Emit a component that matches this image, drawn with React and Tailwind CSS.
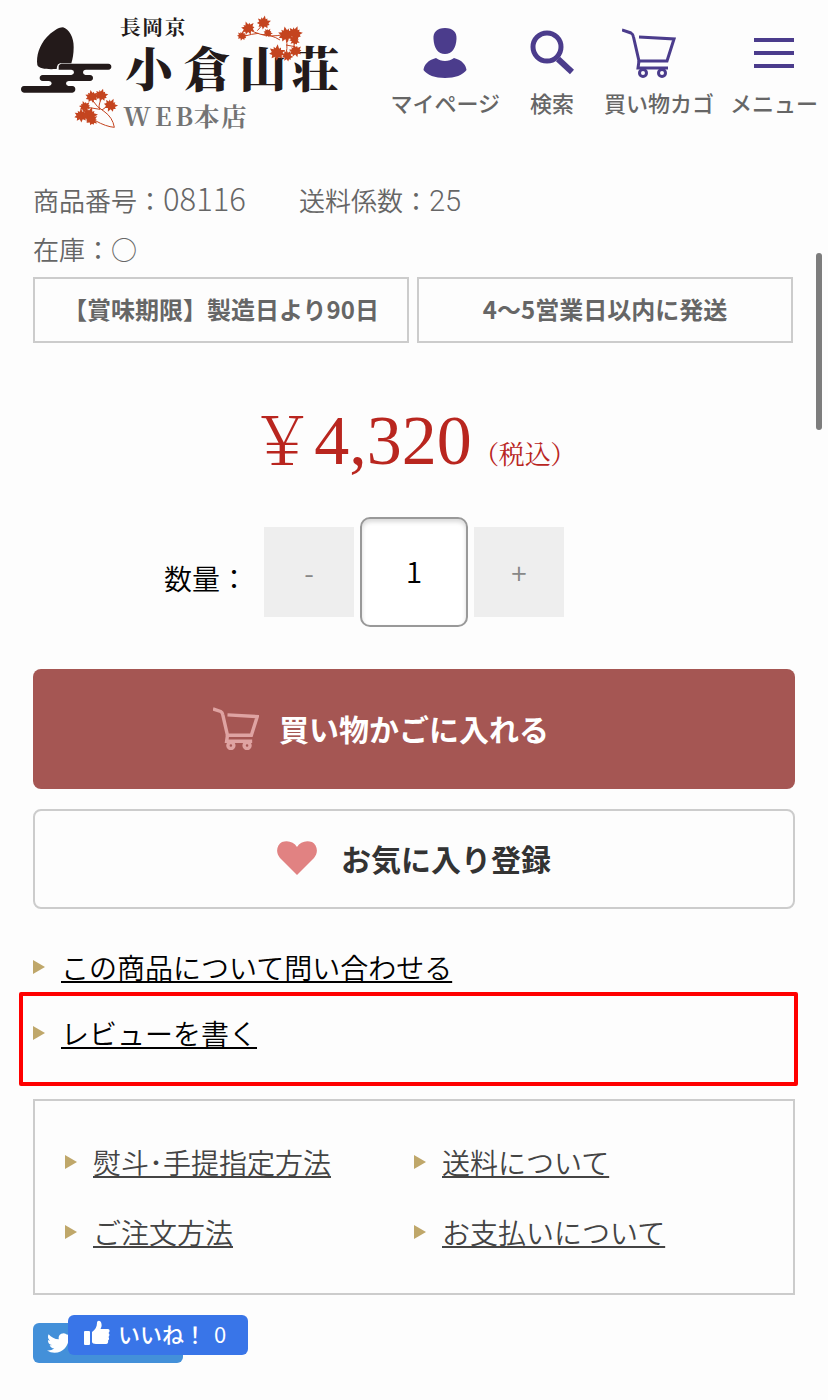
import React, { useState } from 'react';

const NAVY = '#4b3c8c';

// Maple leaf centred on 0,0, roughly 40 units wide
function Leaf({ x, y, r = 0, s = 1 }) {
    return (
        <path
            transform={`translate(${x} ${y}) rotate(${r}) scale(${s})`}
            fill="#c4441f"
            d="M0 -23 L5 -11 L10 -15 L11 -8 L23 -9 L16 0 L21 5 L14 8 L16 17 L6 13 L1 24 L-4 13 L-14 18 L-13 9 L-22 6 L-15 0 L-21 -9 L-10 -8 L-11 -15 L-5 -11 Z"
        />
    );
}

function Logo() {
    return (
        <svg viewBox="0 0 1050 420" className="w-[350px] h-[140px] shrink-0" role="img" aria-label="長岡京 小倉山荘 WEB本店">
            {/* Hill and clouds */}
            <g fill="#231a1a">
                <path d="M189 82 C207 88 222 112 221 142 C221 162 218 178 214 190 L180 190 Q172 192 171 200 L170 207 C145 208 117 208 112 195 C108 168 118 136 140 112 C154 97 174 82 189 82 Z" />
                <path d="M184 191 H325 Q334 192 334 200 Q334 208 325 209 H258 Q249 210 249 217 Q249 224 256 225 H270 Q279 226 279 234 Q279 242 270 243 H206 Q198 244 198 250 Q198 257 205 258 H217 Q226 259 226 268 Q226 277 217 278 H72 Q63 277 63 268 Q63 259 72 258 H147 Q155 257 155 250 Q155 244 147 243 H128 Q119 242 119 234 Q119 226 128 225 H214 Q222 224 222 217 Q222 210 214 209 H176 V197 Q178 192 184 191 Z" />
            </g>

            <text x="360 427 494" y="104" fontSize="62" fill="#231a1a" className="font-['Liberation_Serif','Noto_Serif_CJK_JP','Noto_Sans_CJK_JP',serif] font-bold">長岡京</text>
            <text x="376 550 718 876" y="261" fontSize="142" fill="#231a1a" className="font-['Liberation_Serif','Noto_Serif_CJK_JP','Noto_Sans_CJK_JP',serif] font-black">小倉山荘</text>
            <text x="370 464 526 582 664" y="378" fontSize="76" fill="#747474" className="font-['Noto_Serif_CJK_JP','Noto_Sans_CJK_JP',serif] font-bold">WEB本店</text>

            {/* Upper maple branch */}
            <g fill="none" stroke="#c4441f" strokeWidth="3">
                <path d="M790 72 L772 92 M745 88 Q765 98 782 103 Q812 112 850 104 M735 108 Q755 102 775 100 M853 104 Q866 128 858 162 M858 135 L885 140 M840 120 Q815 104 782 103" />
            </g>
            <Leaf x={791} y={67} s={0.9} r={10} />
            <Leaf x={744} y={84} s={0.9} r={-20} />
            <Leaf x={726} y={107} s={0.65} r={15} />
            <Leaf x={804} y={98} s={0.6} r={30} />
            <Leaf x={858} y={103} s={1.05} r={-10} />
            <Leaf x={885} y={99} s={0.95} r={20} />
            <Leaf x={884} y={120} s={0.7} r={50} />
            <Leaf x={831} y={157} s={1.05} r={5} />
            <Leaf x={862} y={167} s={0.75} r={35} />
            <Leaf x={886} y={152} s={0.85} r={-15} />

            {/* Lower maple branch */}
            <g fill="none" stroke="#c4441f" strokeWidth="3">
                <path d="M277 300 Q290 322 312 334 Q338 352 343 382 Q318 380 286 362 M303 298 Q293 322 300 328 M262 322 L300 328 M328 314 L306 330" />
            </g>
            <Leaf x={275} y={289} s={0.85} r={-10} />
            <Leaf x={304} y={285} s={0.85} r={15} />
            <Leaf x={254} y={319} s={0.75} r={-20} />
            <Leaf x={332} y={315} s={0.9} r={25} />
            <Leaf x={243} y={346} s={0.9} />
            <Leaf x={268} y={344} s={1.05} r={20} />
            <Leaf x={276} y={358} s={0.8} r={60} />
        </svg>
    );
}

function UserIcon() {
    return (
        <svg viewBox="0 0 44 50" className="w-11 h-[50px]" fill={NAVY}>
            <path d="M22 0 C30 0 34 4 33.500 11 C33 20 29 26 22 26 C15 26 11 20 10.500 11 C10 4 14 0 22 0 Z" />
            <path d="M13 30 C18 34 26 34 31 30 C39 32 43 37 43.500 42 C40 47 32 50 22 50 C12 50 4 47 .5 42 C1 37 5 32 13 30 Z" />
        </svg>
    );
}

function SearchIcon() {
    return (
        <svg viewBox="0 0 44 50" className="w-11 h-[50px]" fill="none" stroke={NAVY}>
            <circle cx="17" cy="19" r="14" strokeWidth="5" />
            <path d="M28 31 L42 44" strokeWidth="6" />
        </svg>
    );
}

function CartIcon({ className, color, width = 3 }) {
    return (
        <svg viewBox="0 0 54 50" className={className} fill="none" stroke={color} strokeWidth={width}>
            <path d="M0 2 L9 5 Q11 6 11.500 9 L17 33 H45 L52 11 L17 9" />
            <path d="M17 33 L16 40 H46" />
            <circle cx="21" cy="45" r="3.500" />
            <circle cx="40" cy="45" r="3.500" />
        </svg>
    );
}

function MenuIcon() {
    return (
        <svg viewBox="0 0 40 50" className="w-10 h-[50px]" stroke={NAVY} strokeWidth="4">
            <path d="M0 12 H40 M0 25 H40 M0 38 H40" />
        </svg>
    );
}

function Arrow() {
    return (
        <svg viewBox="0 0 12 16" className="w-3 h-4 shrink-0" fill="#bfa76a">
            <path d="M0 1 L12 8 L0 15 Z" />
        </svg>
    );
}

const guideLinks = ['熨斗･手提指定方法', '送料について', 'ご注文方法', 'お支払いについて'];

export default function App() {
    const [quantity, setQuantity] = useState(1);

    return (
        <div className="relative min-h-screen bg-[#fdfdfd] text-black font-['Noto_Sans_CJK_JP',sans-serif]">

            {/* Header */}
            <header className="flex items-start justify-between pr-[10px]">
                <a href="#"><Logo /></a>
                <nav className="flex gap-4 pt-7 text-[22px] leading-8 font-medium text-[#666]">
                    <a href="#" className="flex flex-col items-center gap-2">
                        <UserIcon />
                        マイページ
                    </a>
                    <a href="#" className="flex flex-col items-center gap-2 px-[14px]">
                        <SearchIcon />
                        検索
                    </a>
                    <a href="#" className="flex flex-col items-center gap-2">
                        <CartIcon className="w-[54px] h-[50px] mr-5" color={NAVY} />
                        買い物カゴ
                    </a>
                    <a href="#" className="flex flex-col items-center gap-2">
                        <MenuIcon />
                        メニュー
                    </a>
                </nav>
            </header>

            <main className="px-[33px] pt-[34px]">

                {/* Product data */}
                <div className="text-[26px] leading-[48px] font-[350] text-[#666]">
                    <div className="flex items-baseline gap-[53px]">
                        <p>商品番号：<span className="text-[31px] font-light">08116</span></p>
                        <p>送料係数：<span className="text-[29px] font-light font-['Roboto',sans-serif]">25</span></p>
                    </div>
                    <p>在庫：○</p>
                </div>
                <ul className="grid grid-cols-2 gap-2 pr-[2px] mt-1 text-2xl font-bold text-[#666] text-center">
                    <li className="border-2 border-[#ccc] h-[66px] leading-[60px]">【賞味期限】製造日より90日</li>
                    <li className="border-2 border-[#ccc] h-[66px] leading-[60px]">4〜5営業日以内に発送</li>
                </ul>

                {/* Price */}
                <p className="flex items-baseline justify-center h-[90px] mt-12 pr-[14px] text-[#b9261f] leading-[90px] font-['Noto_Serif_CJK_JP','Noto_Sans_CJK_JP',serif]">
                    <span className="text-[64px]">￥<span className="text-[70px] font-['Liberation_Serif',serif]">4,320</span></span>
                    <span className="ml-[14px] text-[26px] [font-feature-settings:'palt']">（税込）</span>
                </p>

                {/* Quantity */}
                <div className="grid grid-cols-[1fr_auto_1fr] items-center mt-9">
                    <label htmlFor="quantity" className="justify-self-end pt-3 pr-4 text-[28px] font-[350]">数量：</label>
                    <div className="flex items-center gap-[6px]">
                        <button
                            onClick={() => setQuantity(Math.max(1, quantity - 1))}
                            className="size-[90px] bg-[#eee] text-[28px] font-[350] text-[#888]"
                        >
                            -
                        </button>
                        <input
                            id="quantity"
                            type="text"
                            value={quantity}
                            onChange={(e) => setQuantity(Number(e.target.value) || 1)}
                            className="w-[108px] h-[110px] pb-1 rounded-[10px] border-2 border-[#999] bg-white text-center text-[30px] font-[350] shadow-[inset_0_3px_4px_rgba(0,0,0,0.15)]"
                        />
                        <button
                            onClick={() => setQuantity(quantity + 1)}
                            className="size-[90px] bg-[#eee] text-[28px] font-[350] text-[#888]"
                        >
                            +
                        </button>
                    </div>
                </div>

                {/* Actions */}
                <button className="flex w-full h-[120px] items-center justify-center gap-5 mt-[42px] pb-[2px] pr-[66px] rounded-lg bg-[#a55653] text-[30px] font-bold text-white">
                    <CartIcon className="w-[46px] h-[43px]" color="#dfa3a2" width={4} />
                    買い物かごに入れる
                </button>
                <button className="flex w-full h-[100px] items-center justify-center gap-6 mt-5 pb-[2px] rounded-lg border-2 border-[#ccc] text-[30px] font-bold text-[#333]">
                    <svg viewBox="0 0 40 34" className="w-10 h-[34px]" fill="#e18282">
                        <path d="M20 34 L3 17 C-2 11 0 4 5 1 C11 -1 17 1 20 6 C23 1 29 -1 35 1 C40 4 42 11 37 17 Z" />
                    </svg>
                    お気に入り登録
                </button>

                {/* Product links */}
                <ul className="mt-[25px] text-[28px] leading-[66px] font-[350]">
                    <li className="flex items-center gap-4">
                        <Arrow />
                        <a href="#" className="underline decoration-2 underline-offset-2">この商品について問い合わせる</a>
                    </li>
                    <li className="relative flex items-center gap-4">
                        <Arrow />
                        <a href="#" className="underline decoration-2 underline-offset-2">レビューを書く</a>
                        <span className="absolute -top-2 -bottom-5 -left-[14px] -right-[3px] border-4 border-[#f00] rounded-[2px] pointer-events-none" />
                    </li>
                </ul>

                {/* Shopping guide */}
                <ul className="grid grid-cols-2 mt-[33px] px-[30px] py-[26px] border-2 border-[#ccc] text-[28px] leading-[70px] font-[350] text-[#444]">
                    {guideLinks.map((label) => (
                        <li key={label} className="flex items-center gap-4">
                            <Arrow />
                            <a href="#" className="underline decoration-2 underline-offset-2">{label}</a>
                        </li>
                    ))}
                </ul>

                {/* Social buttons */}
                <div className="relative mt-7 pb-9">
                    <button aria-label="Twitter" className="block w-[150px] h-10 pl-[14px] rounded-md bg-[#4390d9]">
                        <svg viewBox="0 0 24 24" className="size-6" fill="#fff">
                            <path d="M23.950 4.570a10 10 0 0 1-2.820.770 4.960 4.960 0 0 0 2.160-2.720c-.950.560-2 .960-3.130 1.180a4.920 4.920 0 0 0-8.380 4.480C7.690 8.100 4.070 6.130 1.640 3.160a4.820 4.820 0 0 0-.670 2.480c0 1.710.870 3.210 2.190 4.100a4.900 4.900 0 0 1-2.230-.620v.060a4.920 4.920 0 0 0 3.950 4.830 5 5 0 0 1-2.210.080 4.940 4.940 0 0 0 4.600 3.420A9.870 9.870 0 0 1 0 19.540a13.990 13.990 0 0 0 7.550 2.210c9.050 0 14-7.500 14-13.980 0-.210 0-.420-.020-.630a9.940 9.940 0 0 0 2.460-2.550z" />
                        </svg>
                    </button>
                    <button className="absolute -top-2 left-[35px] flex w-[180px] h-10 items-center pl-4 pb-1 rounded-md bg-[#3975e8] text-[22px] font-medium text-white">
                        <svg viewBox="0 0 26 26" className="size-[26px]" fill="#fff">
                            <path d="M0 12 Q0 11 1 11 H5 Q6 11 6 12 V24 Q6 25 5 25 H1 Q0 25 0 24 Z" />
                            <path d="M8 12 C11 10 13 7 13 3 C13 0 17 0 17.500 4 C18 6 17 8 16.500 9 H24 C26 9 26 12 24.500 13 C26 14 25.500 16 24.500 17 C25.500 18 25 20 24 20.500 C24.500 22 24 24 22 24 H12 C10 24 8 23 8 22 Z" />
                        </svg>
                        <span className="ml-2">いいね！</span>
                        <span className="ml-2 font-normal">0</span>
                    </button>
                </div>
            </main>

            {/* Scroll indicator */}
            <div className="absolute top-[253px] right-[6px] w-[6px] h-[177px] rounded-full bg-[#7d7d7d]" />
        </div>
    );
}
